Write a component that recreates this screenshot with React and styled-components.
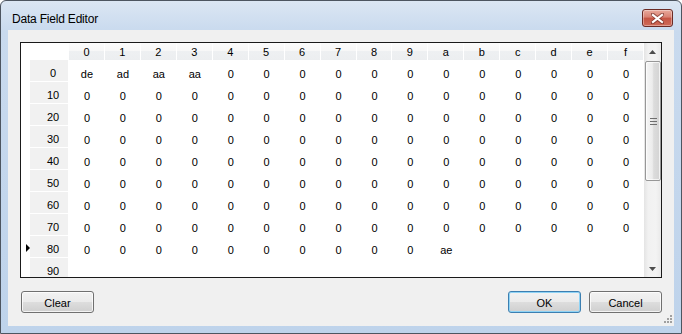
import React from "react";
import styled, { createGlobalStyle } from "styled-components";

const GlobalStyle = createGlobalStyle`
	html, body {
		margin: 0;
		padding: 0;
		background: #ffffff;
	}
	body {
		font-family: "Liberation Sans", Arial, sans-serif;
	}
`;

const Window = styled.div`
	width: 682px;
	height: 334px;
	box-sizing: border-box;
	border: 1px solid #4d5560;
	border-radius: 6px 6px 0 0;
	background: linear-gradient(to bottom, #dbe6f3 0px, #c9daee 30px, #bed3eb 100%);
	display: flex;
	flex-direction: column;
	padding: 0 7px 7px 7px;
`;

const TitleBar = styled.div`
	height: 29px;
	display: flex;
	align-items: flex-start;
	justify-content: space-between;
	padding-left: 4px;
`;

const Title = styled.div`
	font-size: 12px;
	letter-spacing: -0.2px;
	color: #000;
	margin-top: 11px;
	line-height: 14px;
`;

const CloseButton = styled.div`
	width: 31px;
	height: 18px;
	box-sizing: border-box;
	margin-top: 8px;
	margin-right: 1px;
	border: 1px solid #6b2b25;
	border-radius: 3px;
	background: linear-gradient(to bottom, #e9a99c 0%, #d98172 45%, #c55443 50%, #cf6b58 100%);
	box-shadow: inset 0 0 0 1px rgba(255, 255, 255, 0.35);
	display: flex;
	align-items: center;
	justify-content: center;
`;

const Client = styled.div`
	position: relative;
	flex: 1;
	background: #f0f0f0;
	display: flex;
	flex-direction: column;
	padding: 12px 12px 13px 12px;
	gap: 13px;
`;

const GridFrame = styled.div`
	height: 236px;
	box-sizing: border-box;
	border: 1px solid #1a1a1a;
	background: #ffffff;
	display: flex;
	overflow: hidden;
`;

const GridBody = styled.div`
	flex: 1;
	display: grid;
	grid-template-columns: 48px repeat(16, 1fr);
	grid-template-rows: 17px;
	grid-auto-rows: 22px;
	font-size: 11px;
	color: #000;
	overflow: hidden;
`;

const Corner = styled.div`
	background: #ffffff;
`;

const ColHeader = styled.div`
	background: linear-gradient(to bottom, #fcfcfc 0%, #f7f7f7 45%, #eef0f2 50%, #eceef0 100%);
	border-right: 1px solid #ffffff;
	display: flex;
	align-items: center;
	justify-content: center;
`;

const RowHeader = styled.div`
	position: relative;
	background: linear-gradient(to right, #ffffff 0px, #ffffff 9px, #f1f1f1 9px);
	border-right: 1px solid #ffffff;
	border-bottom: 1px solid #ffffff;
	display: flex;
	align-items: center;
	justify-content: center;
	padding: 4px 0 0 17px;
	box-sizing: border-box;
`;

const RowMarker = styled.div`
	position: absolute;
	left: 5px;
	top: 8px;
	width: 0;
	height: 0;
	border-top: 4px solid transparent;
	border-bottom: 4px solid transparent;
	border-left: 4px solid #000;
`;

const Cell = styled.div`
	display: flex;
	align-items: center;
	justify-content: center;
	padding-top: 5px;
	box-sizing: border-box;
`;

const ScrollBar = styled.div`
	width: 17px;
	display: flex;
	flex-direction: column;
	background: linear-gradient(to right, #e4e4e4 0%, #f1f1f1 25%, #f3f3f3 70%, #e9e9e9 100%);
`;

const ScrollArrow = styled.div`
	height: 17px;
	display: flex;
	align-items: center;
	justify-content: center;
`;

const ScrollTrack = styled.div`
	flex: 1;
	display: flex;
	flex-direction: column;
	padding: 1px 0 0 1px;
`;

const Thumb = styled.div`
	height: 120px;
	box-sizing: border-box;
	border: 1px solid #979797;
	border-radius: 2px;
	background: linear-gradient(to right, #f5f5f5 0%, #ececec 45%, #dcdcdc 55%, #d3d3d3 100%);
	box-shadow: inset 0 0 0 1px rgba(255, 255, 255, 0.7);
	display: flex;
	align-items: center;
	justify-content: center;
`;

const Footer = styled.div`
	display: flex;
	align-items: center;
	gap: 8px;
	padding-left: 1px;
`;

const Spacer = styled.div`
	flex: 1;
`;

const Button = styled.div`
	width: 73px;
	height: 22px;
	box-sizing: border-box;
	border: 1px solid ${(p) => (p.$default ? "#3c7fb1" : "#707070")};
	border-radius: 3px;
	background: linear-gradient(to bottom, #f2f2f2 0%, #ebebeb 48%, #dddddd 52%, #cfcfcf 100%);
	box-shadow: inset 0 0 0 1px ${(p) => (p.$default ? "#8fd3f5" : "rgba(255, 255, 255, 0.75)")};
	font-size: 11px;
	color: #000;
	display: flex;
	align-items: center;
	justify-content: center;
	padding-top: 1px;
`;

const ResizeGrip = styled.svg`
	position: absolute;
	right: 2px;
	bottom: 3px;
`;

const columns = ["0", "1", "2", "3", "4", "5", "6", "7", "8", "9", "a", "b", "c", "d", "e", "f"];

const zeros = (n) => Array.from({ length: n }, () => "0");

const rows = [
	{ label: "0", values: ["de", "ad", "aa", "aa", ...zeros(12)] },
	{ label: "10", values: zeros(16) },
	{ label: "20", values: zeros(16) },
	{ label: "30", values: zeros(16) },
	{ label: "40", values: zeros(16) },
	{ label: "50", values: zeros(16) },
	{ label: "60", values: zeros(16) },
	{ label: "70", values: zeros(16) },
	{ label: "80", values: [...zeros(10), "ae", "", "", "", "", ""], current: true },
	{ label: "90", values: Array(16).fill("") },
];

const App = () => {
	return (
		<>
			<GlobalStyle />
			<Window>
				<TitleBar>
					<Title>Data Field Editor</Title>
					<CloseButton>
						<svg width="13" height="11" viewBox="0 0 13 11">
							<path
								d="M1.5 1.5 L11.5 9.5 M11.5 1.5 L1.5 9.5"
								stroke="#5a1e18"
								strokeWidth="4"
								strokeLinecap="square"
								opacity="0.55"
							/>
							<path
								d="M2 2 L11 9 M11 2 L2 9"
								stroke="#ffffff"
								strokeWidth="2.2"
								strokeLinecap="square"
							/>
						</svg>
					</CloseButton>
				</TitleBar>
				<Client>
					<GridFrame>
						<GridBody>
							<Corner />
							{columns.map((c) => (
								<ColHeader key={c}>{c}</ColHeader>
							))}
							{rows.map((row) => (
								<React.Fragment key={row.label}>
									<RowHeader>
										{row.current && <RowMarker />}
										{row.label}
									</RowHeader>
									{row.values.map((v, i) => (
										<Cell key={i}>{v}</Cell>
									))}
								</React.Fragment>
							))}
						</GridBody>
						<ScrollBar>
							<ScrollArrow>
								<svg width="7" height="4" viewBox="0 0 7 4">
									<path d="M3.5 0 L7 4 L0 4 Z" fill="#4d4d4d" />
								</svg>
							</ScrollArrow>
							<ScrollTrack>
								<Thumb>
									<svg width="7" height="7" viewBox="0 0 7 7">
										<path d="M0 0.5 H7 M0 3.5 H7 M0 6.5 H7" stroke="#6e6e6e" strokeWidth="1" />
									</svg>
								</Thumb>
							</ScrollTrack>
							<ScrollArrow>
								<svg width="7" height="4" viewBox="0 0 7 4">
									<path d="M0 0 L7 0 L3.5 4 Z" fill="#4d4d4d" />
								</svg>
							</ScrollArrow>
						</ScrollBar>
					</GridFrame>
					<Footer>
						<Button>Clear</Button>
						<Spacer />
						<Button $default>OK</Button>
						<Button>Cancel</Button>
					</Footer>
					<ResizeGrip width="8" height="8" viewBox="0 0 8 8">
						<g fill="#a0a0a0">
							<rect x="6" y="0" width="2" height="2" />
							<rect x="3" y="3" width="2" height="2" />
							<rect x="6" y="3" width="2" height="2" />
							<rect x="0" y="6" width="2" height="2" />
							<rect x="3" y="6" width="2" height="2" />
							<rect x="6" y="6" width="2" height="2" />
						</g>
					</ResizeGrip>
				</Client>
			</Window>
		</>
	);
};

export default App;
